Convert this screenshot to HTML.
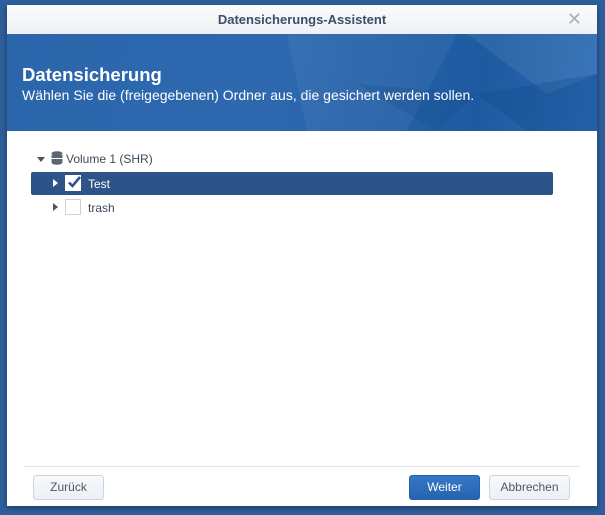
<!DOCTYPE html>
<html><head><style>
body{margin:0;width:605px;height:515px;background:#2f5f9c;font-family:"Liberation Sans",sans-serif;position:relative;overflow:hidden}
.dlg{position:absolute;left:7px;top:5px;width:590px;height:501px;background:#fff;box-shadow:0 2px 6px rgba(0,0,0,.4)}
.tb{height:29px;background:linear-gradient(#fafbfc,#eef1f4);text-align:center;font-size:13px;font-weight:bold;color:#3b4f6b;line-height:29px;position:relative}
.x{position:absolute;right:15px;top:0;font-weight:normal;color:#a9b0b8;font-size:18px}
.bn{height:97px;background:linear-gradient(100deg,#2b66ab 0%,#2e69b0 45%,#2460a7 65%,#1e5aa0 80%,#2a6bb4 100%);color:#fff;position:relative;overflow:hidden}
.bn h1{margin:0;position:absolute;left:15px;top:30px;font-size:18.5px}
.bn p{margin:0;position:absolute;left:15px;top:53px;font-size:14px}
.row{position:absolute;font-size:12px;color:#3d4a5a}
.sel{position:absolute;left:24px;top:167px;width:522px;height:23px;background:#2d5488;border-radius:2px}
.cb{position:absolute;width:14px;height:14px;border:1px solid #c9d0d8;background:#fff}
.tri{position:absolute;width:0;height:0}
.btn{position:absolute;top:470px;height:23px;border:1px solid #cdd6e0;border-radius:3px;background:linear-gradient(#f7f9fb,#ecf0f4);font-size:12px;color:#4b5a6b;text-align:center;line-height:23px}
</style></head><body>
<div class="dlg">
<div class="tb">Datensicherungs-Assistent<span class="x">✕</span></div>
<div class="bn">
<svg width="590" height="97" style="position:absolute;left:0;top:0"><polygon points="280,0 450,0 400,97 300,97" fill="#fff" opacity=".05"/><polygon points="460,0 590,0 590,40 540,60" fill="#fff" opacity=".08"/><polygon points="470,60 590,40 590,97 520,97" fill="#0d3f80" opacity=".25"/><polygon points="350,50 470,60 430,97" fill="#174f93" opacity=".3"/></svg>
<h1>Datensicherung</h1><p>Wählen Sie die (freigegebenen) Ordner aus, die gesichert werden sollen.</p></div>
<div class="tri" style="left:30px;top:152px;border-left:4px solid transparent;border-right:4px solid transparent;border-top:5px solid #4a5563"></div>
<svg style="position:absolute;left:44px;top:146px" width="12" height="14"><ellipse cx="6" cy="2.5" rx="5.5" ry="2.3" fill="#5c6673"/><rect x=".5" y="4" width="11" height="3" fill="#5c6673"/><rect x=".5" y="8" width="11" height="2.5" fill="#5c6673"/><ellipse cx="6" cy="11.5" rx="5.5" ry="2.3" fill="#5c6673"/></svg>
<div class="row" style="left:59px;top:147px">Volume 1 (SHR)</div>
<div class="sel"></div>
<div class="tri" style="left:46px;top:174px;border-top:4px solid transparent;border-bottom:4px solid transparent;border-left:5px solid #fff"></div>
<div class="cb" style="left:58px;top:170px;border-color:#fff"></div>
<svg style="position:absolute;left:59px;top:169px" width="16" height="16"><path d="M3 8.5 L6.5 12 L14 3" stroke="#2d5488" stroke-width="2.6" fill="none"/></svg>
<div class="row" style="left:81px;top:172px;color:#fff">Test</div>
<div class="tri" style="left:46px;top:198px;border-top:4px solid transparent;border-bottom:4px solid transparent;border-left:5px solid #4a5563"></div>
<div class="cb" style="left:58px;top:194px"></div>
<div class="row" style="left:81px;top:196px">trash</div>
<div style="position:absolute;left:17px;top:461px;width:556px;height:1px;background:#e2e6ea"></div>
<div class="btn" style="left:26px;width:69px">Zurück</div>
<div class="btn" style="left:402px;width:69px;background:linear-gradient(#3478c6,#2663ae);border-color:#2562ab;color:#fff">Weiter</div>
<div class="btn" style="left:482px;width:79px">Abbrechen</div>
</div>
</body></html>
